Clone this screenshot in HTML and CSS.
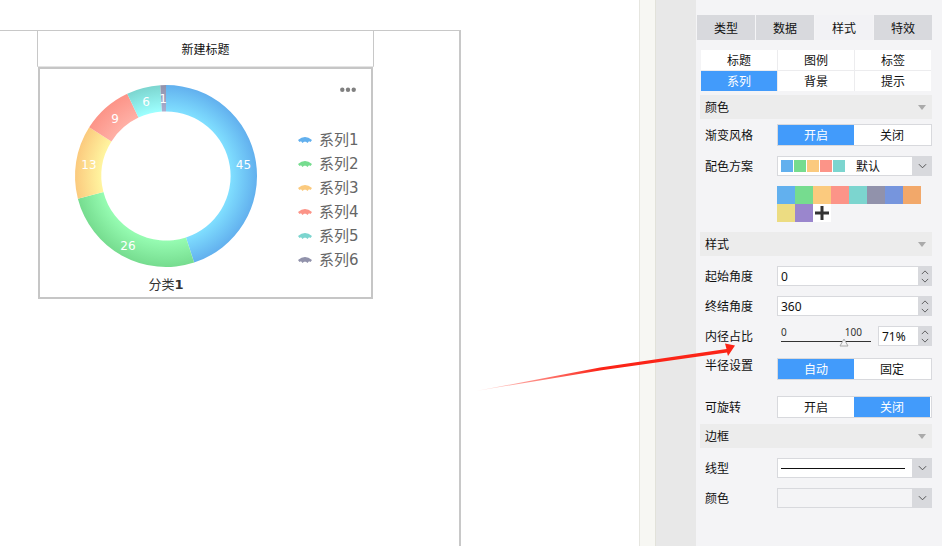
FILE: index.html
```html
<!DOCTYPE html>
<html lang="zh-CN">
<head>
    <meta charset="UTF-8">
    <meta name="viewport" content="width=device-width, initial-scale=1.0">
    <title>图表样式</title>
    <link rel="stylesheet" href="styles.css">
</head>
<body>
    <div class="stage">
        <div class="frame">
            <div class="chart-title">新建标题</div>
            <div class="chart-box">
                <svg class="chart" viewBox="40 69 331 228" width="331" height="228">
                    <defs>
                        <radialGradient id="g1" gradientUnits="userSpaceOnUse" cx="166" cy="176" r="91">
                            <stop offset="0.71" stop-color="#80dfff"/><stop offset="1" stop-color="#62b0ee"/>
                        </radialGradient>
                        <radialGradient id="g2" gradientUnits="userSpaceOnUse" cx="166" cy="176" r="91">
                            <stop offset="0.71" stop-color="#96fcb2"/><stop offset="1" stop-color="#76dc8f"/>
                        </radialGradient>
                        <radialGradient id="g3" gradientUnits="userSpaceOnUse" cx="166" cy="176" r="91">
                            <stop offset="0.71" stop-color="#fff5a0"/><stop offset="1" stop-color="#fbca7e"/>
                        </radialGradient>
                        <radialGradient id="g4" gradientUnits="userSpaceOnUse" cx="166" cy="176" r="91">
                            <stop offset="0.71" stop-color="#ffb0a6"/><stop offset="1" stop-color="#fc9488"/>
                        </radialGradient>
                        <radialGradient id="g5" gradientUnits="userSpaceOnUse" cx="166" cy="176" r="91">
                            <stop offset="0.71" stop-color="#9dffff"/><stop offset="1" stop-color="#7cd5cf"/>
                        </radialGradient>
                        <radialGradient id="g6" gradientUnits="userSpaceOnUse" cx="166" cy="176" r="91">
                            <stop offset="0.71" stop-color="#a9aed0"/><stop offset="1" stop-color="#9192ab"/>
                        </radialGradient>
                        <path id="fan" d="M-7 .5Q0-5.5 7 .5L5.5 2.5 4 1.8 2.5 3.5 1 2.2-1 2.2-2.5 3.5-4 1.8-5.5 2.5Z"/>
                    </defs>

                    <!-- donut, 45 26 13 9 6 1 -->
                    <path fill="url(#g1)" d="M166 85A91 91 0 0 1 194.12 262.55L185.96 237.44A64.6 64.6 0 0 0 166 111.4Z"/>
                    <path fill="url(#g2)" d="M194.12 262.55A91 91 0 0 1 77.86 198.63L103.43 192.07A64.6 64.6 0 0 0 185.96 237.44Z"/>
                    <path fill="url(#g3)" d="M77.86 198.63A91 91 0 0 1 89.17 127.24L111.46 141.39A64.6 64.6 0 0 0 103.43 192.07Z"/>
                    <path fill="url(#g4)" d="M89.17 127.24A91 91 0 0 1 127.25 93.66L138.49 117.55A64.6 64.6 0 0 0 111.46 141.39Z"/>
                    <path fill="url(#g5)" d="M127.25 93.66A91 91 0 0 1 160.29 85.18L161.94 111.53A64.6 64.6 0 0 0 138.49 117.55Z"/>
                    <path fill="url(#g6)" d="M160.29 85.18A91 91 0 0 1 166 85L166 111.4A64.6 64.6 0 0 0 161.94 111.53Z"/>

                    <g class="pie-label">
                        <text x="243.5" y="169">45</text>
                        <text x="128" y="250">26</text>
                        <text x="89" y="169">13</text>
                        <text x="115" y="123">9</text>
                        <text x="146" y="106">6</text>
                        <text x="163" y="103">1</text>
                    </g>

                    <g fill="#808080">
                        <circle cx="342.3" cy="89.7" r="2.2"/>
                        <circle cx="348" cy="89.7" r="2.2"/>
                        <circle cx="353.7" cy="89.7" r="2.2"/>
                    </g>

                    <use href="#fan" x="305" y="139.5" fill="#62b0ee"/>
                    <use href="#fan" x="305" y="163.5" fill="#76dc8f"/>
                    <use href="#fan" x="305" y="187.5" fill="#fbca7e"/>
                    <use href="#fan" x="305" y="211.5" fill="#fc9488"/>
                    <use href="#fan" x="305" y="235.5" fill="#7cd5cf"/>
                    <use href="#fan" x="305" y="259.5" fill="#9192ab"/>
                    <g class="legend-text">
                        <text x="319" y="144.5">系列1</text>
                        <text x="319" y="168.5">系列2</text>
                        <text x="319" y="192.5">系列3</text>
                        <text x="319" y="216.5">系列4</text>
                        <text x="319" y="240.5">系列5</text>
                        <text x="319" y="264.5">系列6</text>
                    </g>
                    <text class="axis-name" x="166" y="289">分类<tspan font-weight="bold">1</tspan></text>
                </svg>
            </div>
        </div>
    </div>
    <div class="strip"></div>
    <div class="rail"></div>

    <div class="panel">
        <div class="tabs">
            <div class="tab">类型</div>
            <div class="tab">数据</div>
            <div class="tab active">样式</div>
            <div class="tab">特效</div>
        </div>
        <div class="subtabs">
            <div class="subtab">标题</div>
            <div class="subtab">图例</div>
            <div class="subtab">标签</div>
            <div class="subtab active">系列</div>
            <div class="subtab">背景</div>
            <div class="subtab">提示</div>
        </div>

        <div class="group first">颜色<span class="caret"></span></div>
        <div class="row tight">
            <label>渐变风格</label>
            <div class="switch"><span class="seg on">开启</span><span class="seg">关闭</span></div>
        </div>
        <div class="row">
            <label>配色方案</label>
            <div class="select">
                <div class="select-value">
                    <span class="chip c1"></span><span class="chip c2"></span><span class="chip c3"></span><span class="chip c4"></span><span class="chip c5"></span>
                    <span class="scheme-name">默认</span>
                </div>
                <div class="select-btn"><svg class="chev-lg" viewBox="0 0 10 6"><path d="M1 1L5 5 9 1"/></svg></div>
            </div>
        </div>
        <div class="swatches">
            <span class="swatch c1"></span><span class="swatch c2"></span><span class="swatch c3"></span><span class="swatch c4"></span>
            <span class="swatch c5"></span><span class="swatch c6"></span><span class="swatch c7"></span><span class="swatch c8"></span>
            <span class="swatch c9"></span><span class="swatch c10"></span>
            <span class="swatch add"><svg viewBox="0 0 18 18" width="18" height="18"><path d="M9 2V16M2 9H16"/></svg></span>
        </div>

        <div class="group">样式<span class="caret"></span></div>
        <div class="row">
            <label>起始角度</label>
            <div class="input-box wide">0</div>
            <div class="spin">
                <svg viewBox="0 0 10 6"><path d="M1 5L5 1 9 5"/></svg>
                <svg viewBox="0 0 10 6"><path d="M1 1L5 5 9 1"/></svg>
            </div>
        </div>
        <div class="row">
            <label>终结角度</label>
            <div class="input-box wide">360</div>
            <div class="spin">
                <svg viewBox="0 0 10 6"><path d="M1 5L5 1 9 5"/></svg>
                <svg viewBox="0 0 10 6"><path d="M1 1L5 5 9 1"/></svg>
            </div>
        </div>
        <div class="row">
            <label>内径占比</label>
            <div class="slider">
                <div class="scale"><span>0</span><span>100</span></div>
                <div class="track"></div>
                <svg class="thumb" viewBox="0 0 10 9" width="10" height="9"><path d="M5 1L9 8H1Z"/></svg>
            </div>
            <div class="input-box short">71%</div>
            <div class="spin">
                <svg viewBox="0 0 10 6"><path d="M1 5L5 1 9 5"/></svg>
                <svg viewBox="0 0 10 6"><path d="M1 1L5 5 9 1"/></svg>
            </div>
        </div>
        <div class="row gap12">
            <label class="label-up">半径设置</label>
            <div class="switch"><span class="seg on">自动</span><span class="seg">固定</span></div>
        </div>
        <div class="row gap16">
            <label>可旋转</label>
            <div class="switch"><span class="seg">开启</span><span class="seg on">关闭</span></div>
        </div>

        <div class="group after-switch">边框<span class="caret"></span></div>
        <div class="row">
            <label>线型</label>
            <div class="select">
                <div class="select-value"><span class="line-sample"></span></div>
                <div class="select-btn"><svg class="chev-lg" viewBox="0 0 10 6"><path d="M1 1L5 5 9 1"/></svg></div>
            </div>
        </div>
        <div class="row">
            <label>颜色</label>
            <div class="select disabled">
                <div class="select-value"></div>
                <div class="select-btn"><svg class="chev-lg" viewBox="0 0 10 6"><path d="M1 1L5 5 9 1"/></svg></div>
            </div>
        </div>
    </div>

    <!-- red annotation arrow, drawn over everything -->
    <svg class="arrow" viewBox="0 0 942 546" width="942" height="546">
        <defs>
            <linearGradient id="fade" gradientUnits="userSpaceOnUse" x1="476" y1="391" x2="600" y2="369">
                <stop offset="0" stop-color="#ff2a1c" stop-opacity="0.15"/>
                <stop offset="1" stop-color="#fb2417"/>
            </linearGradient>
        </defs>
        <path fill="url(#fade)" d="M476 391L600 367.6 600 370.4Z"/>
        <path fill="#fb2417" d="M600 367.6L726.5 349 725 343.5 735 345.5 728 356 727 352.5 600 370.4Z"/>
    </svg>
</body>
</html>
```

FILE: styles.css
```css
*{
    padding: 0;
    margin: 0;
    box-sizing: border-box;
}
body{
    position: relative;
    width: 942px;
    height: 546px;
    overflow: hidden;
    display: flex;
    background: white;
    color: #111;
    font-family: "Noto Sans", "Noto Sans CJK SC", sans-serif;
    font-size: 12px;
}

/* canvas */
.stage{
    width: 639px;
    height: 546px;
    padding-top: 30px;
}
.frame{
    width: 461px;
    height: 516px;
    border-top: 1px solid #c8c8c8;
    border-right: 2px solid #c8c8c8;
}
.chart-title{
    width: 337px;
    height: 36px;
    margin-left: 37px;
    border-left: 1px solid #c8c8c8;
    border-right: 1px solid #c8c8c8;
    border-bottom: 1px solid #e4e4e4;
    display: flex;
    align-items: center;
    justify-content: center;
}
.chart-box{
    width: 335px;
    height: 232px;
    margin-left: 38px;
    border: 2px solid #c6c6c6;
}
.chart{
    display: block;
}
.pie-label text{
    fill: white;
    font-family: "DejaVu Sans", sans-serif;
    font-size: 12px;
    text-anchor: middle;
}
.legend-text text{
    fill: #666;
    font-family: "DejaVu Sans", "Noto Sans CJK SC", sans-serif;
    font-size: 15px;
}
.axis-name{
    fill: #333;
    font-family: "DejaVu Sans", "Noto Sans CJK SC", sans-serif;
    font-size: 13px;
    text-anchor: middle;
}

/* strips between canvas and panel */
.strip{
    width: 17px;
    background: #f7f7f3;
    border-left: 1px solid #e6e6e0;
    border-right: 1px solid #e2e2da;
}
.rail{
    width: 40px;
    background: #e8e8e8;
}

/* right panel */
.panel{
    width: 246px;
    padding: 15px 10px 0 4px;
    background: #f4f4f6;
}
.tabs{
    display: flex;
    gap: 1px;
    margin-left: -3px;
}
.tab{
    width: 60px;
    height: 25px;
    display: flex;
    align-items: center;
    justify-content: center;
    background: #d8d9dd;
}
.tab.active{
    background: #f2f2f5;
}
.subtabs{
    display: grid;
    grid-template-columns: repeat(3, 76px);
    grid-auto-rows: 20px;
    gap: 1px;
    width: 230px;
    margin: 10px 0 0 1px;
    background: #ececee;
}
.subtab{
    display: flex;
    align-items: center;
    justify-content: center;
    background: white;
}
.subtab.active{
    background: #429bfb;
    color: white;
}
.group{
    position: relative;
    height: 24px;
    margin-top: 10px;
    padding-left: 5px;
    display: flex;
    align-items: center;
    background: #ececec;
}
.group.first{
    margin-top: 4px;
}
.group.after-switch{
    margin-top: 6px;
}
.caret{
    position: absolute;
    right: 6px;
    top: 10px;
    border-left: 4px solid transparent;
    border-right: 4px solid transparent;
    border-top: 5px solid #aaa;
}
.row{
    display: flex;
    align-items: center;
    margin-top: 10px;
    padding-left: 5px;
}
.row.tight{
    margin-top: 5px;
}
.row.gap12{
    margin-top: 12px;
}
.row.gap16{
    margin-top: 16px;
}
label{
    width: 72px;
    flex-shrink: 0;
}
.label-up{
    align-self: flex-start;
    line-height: 16px;
}
.switch{
    display: flex;
    width: 155px;
    height: 22px;
    border: 1px solid #d8d9dd;
    background: white;
}
.seg{
    width: 76px;
    display: flex;
    align-items: center;
    justify-content: center;
}
.seg.on{
    background: #429bfb;
    color: white;
}
.select{
    display: flex;
    width: 155px;
    height: 20px;
}
.select-value{
    flex: 1;
    display: flex;
    align-items: center;
    gap: 1px;
    padding-left: 3px;
    background: white;
    border: 1px solid #d8d9dd;
    border-right: none;
}
.select.disabled .select-value{
    background: #f4f4f6;
}
.select-btn{
    width: 20px;
    display: flex;
    align-items: center;
    justify-content: center;
    background: #d8d9dd;
}
.chev-lg{
    width: 9px;
    height: 6px;
}
svg path{
    fill: none;
}
.select-btn path,
.spin path{
    stroke: #444;
    stroke-width: 1;
}
.chart path,
.chart use,
.arrow path{
    fill: revert-layer;
}
.chip{
    width: 12px;
    height: 12px;
}
.scheme-name{
    margin-left: 10px;
}
.line-sample{
    width: 124px;
    height: 1px;
    background: #111;
}
.c1{ background: #62b0ee; }
.c2{ background: #76dc8f; }
.c3{ background: #fbca7e; }
.c4{ background: #fc9488; }
.c5{ background: #7cd5cf; }
.c6{ background: #9192ab; }
.c7{ background: #7695dd; }
.c8{ background: #f2a86a; }
.c9{ background: #ecdc82; }
.c10{ background: #9a86cd; }
.swatches{
    display: flex;
    flex-wrap: wrap;
    width: 144px;
    margin: 10px 0 0 77px;
}
.swatch{
    width: 18px;
    height: 18px;
}
.swatch.add{
    background: white;
}
.swatch.add svg{
    display: block;
}
.swatch.add path{
    stroke: #333;
    stroke-width: 3;
}
.input-box{
    height: 20px;
    display: flex;
    align-items: center;
    padding-left: 3px;
    background: white;
    border: 1px solid #d8d9dd;
    border-right: none;
}
.input-box.wide{
    width: 141px;
}
.input-box.short{
    width: 40px;
}
.spin{
    width: 14px;
    height: 20px;
    display: flex;
    flex-direction: column;
    align-items: center;
    justify-content: space-around;
    padding: 2px 0;
    background: #d8d9dd;
}
.spin svg{
    width: 8px;
    height: 5px;
}
.slider{
    position: relative;
    width: 90px;
    height: 20px;
    margin: 0 7px 0 4px;
}
.scale{
    display: flex;
    justify-content: space-between;
    padding-right: 9px;
    font-size: 10px;
    line-height: 12px;
    color: #333;
}
.track{
    height: 1px;
    margin-top: 3px;
    background: #333;
}
.thumb{
    position: absolute;
    left: 58px;
    top: 12px;
}
.thumb path{
    fill: #f4f4f6;
    stroke: #aaa;
    stroke-width: 1;
}
.arrow{
    position: absolute;
    left: 0;
    top: 0;
    pointer-events: none;
}
```
